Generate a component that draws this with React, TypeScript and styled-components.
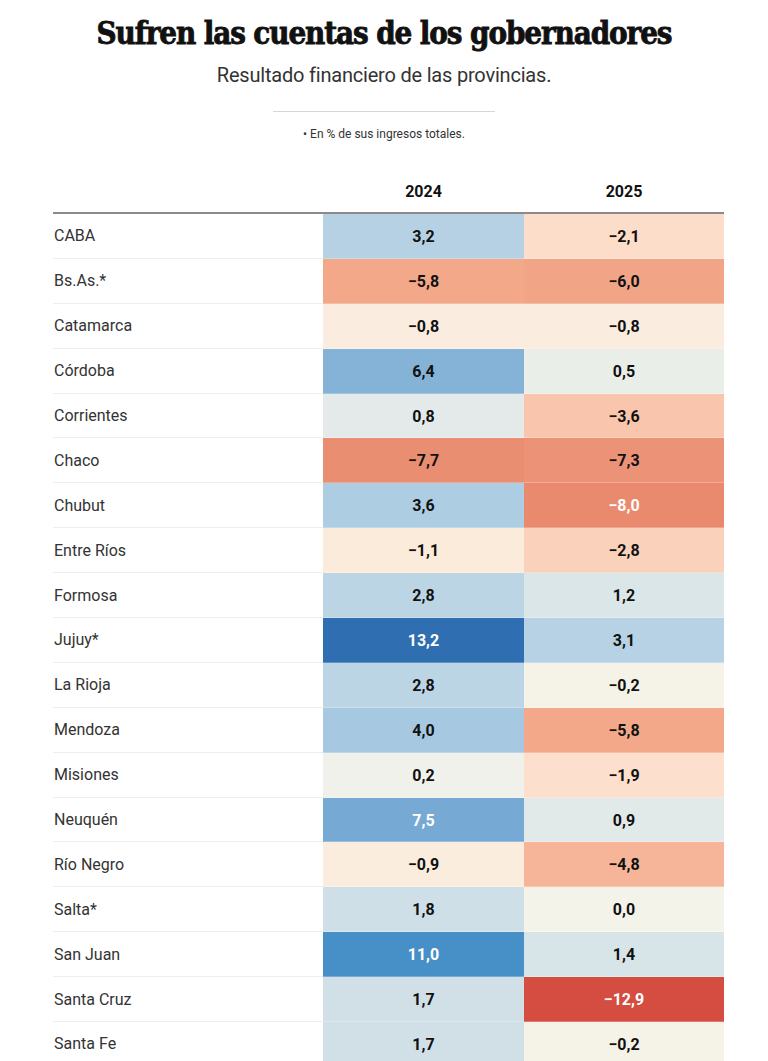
import React from 'react'
import styled, { createGlobalStyle } from 'styled-components'

const GlobalStyle = createGlobalStyle`
  body {
    margin: 0;
    background: #ffffff;
    font-family: 'Roboto', 'Liberation Sans', sans-serif;
  }
`

type Row = { name: string; a: number; b: number }

const rows: Row[] = [
  { name: 'CABA', a: 3.2, b: -2.1 },
  { name: 'Bs.As.*', a: -5.8, b: -6.0 },
  { name: 'Catamarca', a: -0.8, b: -0.8 },
  { name: 'Córdoba', a: 6.4, b: 0.5 },
  { name: 'Corrientes', a: 0.8, b: -3.6 },
  { name: 'Chaco', a: -7.7, b: -7.3 },
  { name: 'Chubut', a: 3.6, b: -8.0 },
  { name: 'Entre Ríos', a: -1.1, b: -2.8 },
  { name: 'Formosa', a: 2.8, b: 1.2 },
  { name: 'Jujuy*', a: 13.2, b: 3.1 },
  { name: 'La Rioja', a: 2.8, b: -0.2 },
  { name: 'Mendoza', a: 4.0, b: -5.8 },
  { name: 'Misiones', a: 0.2, b: -1.9 },
  { name: 'Neuquén', a: 7.5, b: 0.9 },
  { name: 'Río Negro', a: -0.9, b: -4.8 },
  { name: 'Salta*', a: 1.8, b: 0.0 },
  { name: 'San Juan', a: 11.0, b: 1.4 },
  { name: 'Santa Cruz', a: 1.7, b: -12.9 },
  { name: 'Santa Fe', a: 1.7, b: -0.2 },
]

// colour stops for the diverging scale (value, rgb)
const stops: [number, [number, number, number]][] = [
  [-13, [212, 76, 63]],
  [-8, [233, 138, 111]],
  [-6, [242, 165, 134]],
  [-4, [248, 192, 165]],
  [-2, [252, 222, 203]],
  [-1, [251, 236, 221]],
  [0, [244, 243, 234]],
  [2, [203, 221, 231]],
  [4, [166, 201, 225]],
  [7.5, [118, 169, 211]],
  [11, [70, 144, 199]],
  [13.2, [47, 111, 177]],
]

const colorFor = (v: number): string => {
  for (let i = 0; i < stops.length - 1; i++) {
    const [v0, c0] = stops[i]
    const [v1, c1] = stops[i + 1]
    if (v >= v0 && v <= v1) {
      const t = (v - v0) / (v1 - v0)
      const c = c0.map((x, k) => Math.round(x + (c1[k] - x) * t))
      return `rgb(${c.join(',')})`
    }
  }
  return v < 0 ? 'rgb(212,76,63)' : 'rgb(47,111,177)'
}

const fmt = (v: number): string => {
  const s = Math.abs(v).toFixed(1).replace('.', ',')
  return v < 0 ? `\u2212${s}` : s
}

const isStrong = (v: number): boolean => v >= 7 || v <= -7.9

const App = () => (
  <>
    <GlobalStyle />
    <Page>
      <Title>Sufren las cuentas de los gobernadores</Title>
      <Subtitle>Resultado financiero de las provincias.</Subtitle>
      <Rule />
      <Note>• En % de sus ingresos totales.</Note>
      <Table>
        <HeadRow>
          <HeadCell />
          <HeadCell>2024</HeadCell>
          <HeadCell>2025</HeadCell>
        </HeadRow>
        {rows.map((r) => (
          <BodyRow key={r.name}>
            <NameCell>{r.name}</NameCell>
            <ValueCell style={{ background: colorFor(r.a) }} $light={isStrong(r.a)}>
              {fmt(r.a)}
            </ValueCell>
            <ValueCell style={{ background: colorFor(r.b) }} $light={isStrong(r.b)}>
              {fmt(r.b)}
            </ValueCell>
          </BodyRow>
        ))}
      </Table>
    </Page>
  </>
)

export default App

const Page = styled.div`
  display: flex;
  flex-direction: column;
  align-items: center;
  padding-top: 14px;
`

const Title = styled.h1`
  margin: 0;
  font-family: 'DejaVu Serif Condensed', 'DejaVu Serif', serif;
  font-stretch: condensed;
  font-weight: 900;
  font-size: 31px;
  line-height: 38px;
  letter-spacing: -1.1px;
  color: #111;
  -webkit-text-stroke: 0.8px #111;
`

const Subtitle = styled.div`
  margin-top: 11px;
  font-size: 20px;
  line-height: 24px;
  letter-spacing: -0.2px;
  color: #333;
`

const Rule = styled.div`
  width: 222px;
  height: 1px;
  margin-top: 24px;
  background: #d6d6d6;
`

const Note = styled.div`
  margin-top: 14px;
  font-size: 12px;
  line-height: 16px;
  color: #333;
`

const Table = styled.div`
  width: 671px;
  margin-top: 38px;
  margin-left: 9px;
  display: flex;
  flex-direction: column;
`

const HeadRow = styled.div`
  display: grid;
  grid-template-columns: 270px 201px 200px;
  height: 32px;
  border-bottom: 2px solid #8a8a8a;
`

const HeadCell = styled.div`
  display: flex;
  align-items: flex-start;
  justify-content: center;
  padding-top: 2px;
  font-weight: 700;
  font-size: 16px;
  line-height: 20px;
  color: #111;
`

const BodyRow = styled.div`
  display: grid;
  grid-template-columns: 270px 201px 200px;
  height: 44.9px;
`

const NameCell = styled.div`
  display: flex;
  align-items: center;
  padding-left: 1px;
  font-size: 16px;
  color: #333;
  border-bottom: 1px solid #eeeeee;
`

const ValueCell = styled.div<{ $light: boolean }>`
  display: flex;
  align-items: center;
  justify-content: center;
  font-weight: 700;
  font-size: 16px;
  color: ${(p) => (p.$light ? '#ffffff' : '#111111')};
  box-shadow: inset 0 -1px 0 rgba(255, 255, 255, 0.25);
`
